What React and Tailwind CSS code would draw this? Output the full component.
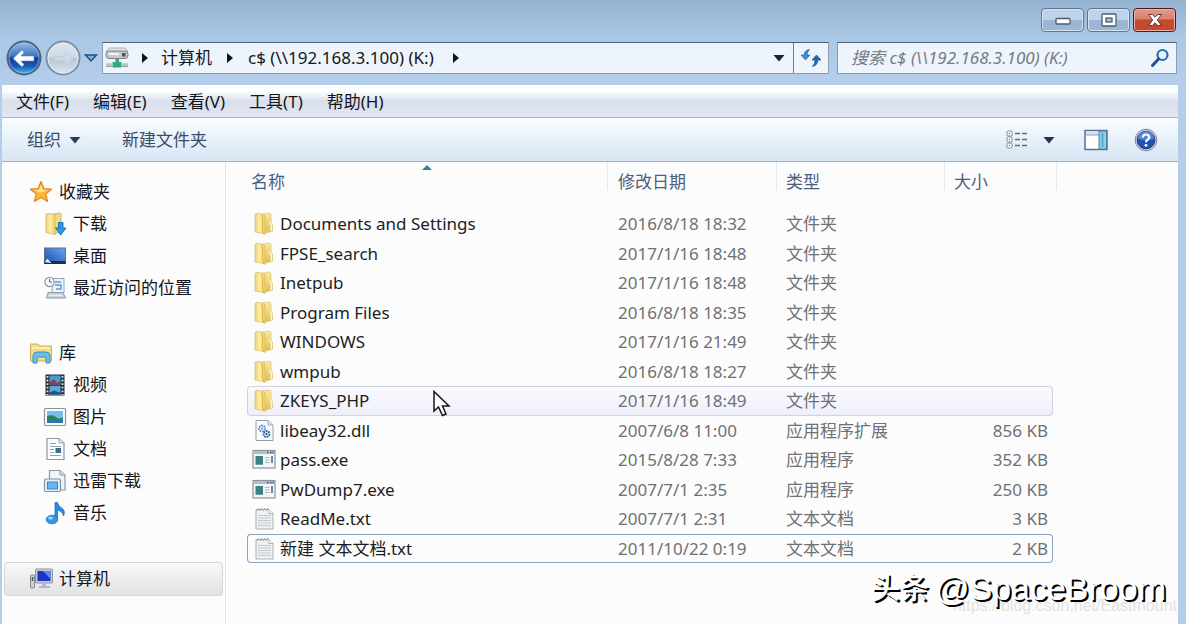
import React from "react";

const folders = [
  { name: "Documents and Settings", date: "2016/8/18 18:32", type: "文件夹", icon: "folder" },
  { name: "FPSE_search", date: "2017/1/16 18:48", type: "文件夹", icon: "folder" },
  { name: "Inetpub", date: "2017/1/16 18:48", type: "文件夹", icon: "folder" },
  { name: "Program Files", date: "2016/8/18 18:35", type: "文件夹", icon: "folder" },
  { name: "WINDOWS", date: "2017/1/16 21:49", type: "文件夹", icon: "folder" },
  { name: "wmpub", date: "2016/8/18 18:27", type: "文件夹", icon: "folder" },
  { name: "ZKEYS_PHP", date: "2017/1/16 18:49", type: "文件夹", icon: "folder", state: "hover" },
];

const files = [
  { name: "libeay32.dll", date: "2007/6/8 11:00", type: "应用程序扩展", size: "856 KB", icon: "dll" },
  { name: "pass.exe", date: "2015/8/28 7:33", type: "应用程序", size: "352 KB", icon: "exe" },
  { name: "PwDump7.exe", date: "2007/7/1 2:35", type: "应用程序", size: "250 KB", icon: "exe" },
  { name: "ReadMe.txt", date: "2007/7/1 2:31", type: "文本文档", size: "3 KB", icon: "txt" },
  { name: "新建 文本文档.txt", date: "2011/10/22 0:19", type: "文本文档", size: "2 KB", icon: "txt", state: "focus" },
];

const menus = ["文件(F)", "编辑(E)", "查看(V)", "工具(T)", "帮助(H)"];

const FolderIcon = () => (
  <svg width="22" height="24" viewBox="0 0 22 24">
    <defs>
      <linearGradient id="folderFront" x1="0" x2="1" y1="0" y2="0">
        <stop offset="0" stopColor="#ecd07a" />
        <stop offset="0.45" stopColor="#fbeea6" />
        <stop offset="1" stopColor="#f0cf62" />
      </linearGradient>
      <linearGradient id="folderBack" x1="0" x2="0" y1="0" y2="1">
        <stop offset="0" stopColor="#f8e9a4" />
        <stop offset="1" stopColor="#e2bd4e" />
      </linearGradient>
    </defs>
    <path d="M9 2 L16 1.2 Q18 1.2 18 3 V10 Q20 12 19.500 15 V19 L11 21.500 Z" fill="url(#folderBack)" stroke="#dcbf6a" strokeWidth="0.7" />
    <path d="M16.500 10 Q19.500 13 18 19" fill="none" stroke="#fdf8da" strokeWidth="1.400" />
    <path d="M2 3 Q2 1.500 3.500 1.500 L7 1.500 L12 3.500 V22.500 L8 21 L2 20 Z" fill="url(#folderFront)" stroke="#d9bc66" strokeWidth="0.7" />
    <path d="M8 3 Q10 5 9.500 12 T11 22" fill="none" stroke="#d9ac3e" strokeWidth="0.9" />
  </svg>
);

const DllIcon = () => (
  <svg width="22" height="24" viewBox="0 0 22 24">
    <path d="M3 1.500 H15 L20 6 V21.500 H3 Z" fill="#fbfcfe" stroke="#949ca8" />
    <path d="M15 1.500 V6 H20" fill="#dfe4ec" stroke="#a2abb7" />
    <circle cx="9" cy="9.500" r="3" fill="#eaf3fc" stroke="#5e8abc" strokeWidth="1.800" strokeDasharray="1.8 0.8" />
    <circle cx="13.500" cy="15" r="3" fill="#cfe3f7" stroke="#34619c" strokeWidth="1.800" strokeDasharray="1.8 0.8" />
    <circle cx="9" cy="9.500" r="1" fill="#5d8cc4" />
    <circle cx="13.500" cy="15" r="1" fill="#23487c" />
  </svg>
);

const ExeIcon = () => (
  <svg width="24" height="24" viewBox="0 0 24 24">
    <rect x="1" y="2.500" width="22" height="17.500" fill="#f4f6f8" stroke="#8a94a0" strokeWidth="1.200" />
    <rect x="1.600" y="3" width="20.800" height="3" fill="#b4bdc8" />
    <path d="M15 4.500 h1.500 M18 4.500 h1.500 M20.500 4.500 h1.500" stroke="#4d5a69" strokeWidth="1.500" />
    <rect x="3.500" y="8" width="7.500" height="8.500" fill="#2f8a7c" />
    <path d="M3.500 16.500 L11 9 V16.500 Z" fill="#4a7892" />
    <path d="M13 9.500 h4.500 M13 12 h4.500 M13 14.500 h4.500" stroke="#a9b7c4" strokeWidth="1.200" />
    <path d="M20 8 v7" stroke="#3b648d" strokeWidth="1.500" />
  </svg>
);

const TxtIcon = () => (
  <svg width="22" height="24" viewBox="0 0 22 24">
    <path d="M3 2.500 H16 L20 6.500 V22 H3 Z" fill="#eff0f1" stroke="#abafb4" />
    <path d="M4 4 l2 -3 M7 4 l2 -3 M10 4 l2 -3 M13 4 l2 -3" stroke="#969ba1" strokeWidth="1" />
    <path d="M16 2.500 V6.500 H20" fill="#fff" stroke="#abafb4" />
    <path d="M5 8.500 H18 M5 11 H18 M5 13.500 H18 M5 16 H18 M5 18.500 H18" stroke="#c6c9cd" strokeWidth="1" />
  </svg>
);

const fileIcons = { folder: FolderIcon, dll: DllIcon, exe: ExeIcon, txt: TxtIcon };

const StarIcon = () => (
  <svg width="24" height="24" viewBox="0 0 24 24">
    <path
      d="M12 1.5 L14.9 8.7 L22.5 9.2 L16.7 14.1 L18.7 21.5 L12 17.4 L5.3 21.5 L7.3 14.1 L1.5 9.2 L9.1 8.7 Z"
      fill="#fdb931"
      stroke="#e0842a"
      strokeWidth="1.2"
      strokeLinejoin="round"
    />
    <path d="M12 4.5 L14 10 L19 10.3 L12 12.5 L5 10.3 L10 10 Z" fill="#ffe38a" />
  </svg>
);

const DownloadIcon = () => (
  <svg width="24" height="24" viewBox="0 0 24 24">
    <path d="M10 2 L17 1 Q18 1 18 2 V19 L12 22 Z" fill="#efd888" stroke="#cfae5c" strokeWidth="0.8" />
    <path d="M3 2 L8 1.500 L12 3 V22.500 L3 20.500 Z" fill="url(#folderFront)" stroke="#d7b660" strokeWidth="0.8" />
    <path d="M15.5 10.5 H20 V16 H23 L17.7 23 L12.5 16 H15.5 Z" fill="#2d95e8" stroke="#1568b8" strokeWidth="0.9" />
  </svg>
);

const DesktopIcon = () => (
  <svg width="24" height="24" viewBox="0 0 24 24">
    <defs>
      <linearGradient id="desk" x1="0" x2="1" y1="1" y2="0">
        <stop offset="0" stopColor="#1b4bb0" />
        <stop offset="1" stopColor="#6aa5f0" />
      </linearGradient>
    </defs>
    <rect x="1.5" y="4" width="21" height="15.5" fill="url(#desk)" stroke="#5b6f85" />
    <path d="M1.5 17 h21 v3 h-21 z" fill="#1d2d45" />
    <path d="M2.5 18 l2 -3 l2 3 z M6 18.5 h2" fill="#d8ecff" stroke="#d8ecff" />
  </svg>
);

const RecentIcon = () => (
  <svg width="24" height="24" viewBox="0 0 24 24">
    <path d="M10 2.5 H21 V17 H9 Z" fill="#eaf4fc" stroke="#92a5b6" />
    <path d="M12 6 h6 M12 9 h6 v4 h-5" fill="none" stroke="#5f9bd0" strokeWidth="1.5" />
    <path d="M5 16.5 H20 L22.500 22 H3.500 Z" fill="#c7cfd6" stroke="#8f9aa4" />
    <path d="M6 19.5 h13" stroke="#eef1f3" strokeWidth="1.5" />
    <circle cx="6.5" cy="6" r="4.6" fill="#f7f9fb" stroke="#8b98a5" strokeWidth="1.2" />
    <path d="M6.5 3 V6 H9" fill="none" stroke="#5c6d7e" />
  </svg>
);

const LibraryIcon = () => (
  <svg width="24" height="24" viewBox="0 0 24 24">
    <path d="M1.5 3 H9 L11 5 H22.5 V20 H1.5 Z" fill="#f3dc86" stroke="#cfae58" />
    <path d="M3 7 H21" stroke="#fff5c8" strokeWidth="1.5" />
    <path d="M4 22 V15 Q4 11 8 11 H17 Q21 11 21 15 V22 H17 V17.5 Q17 16 15 16 H10 Q8 16 8 17.5 V22 Z" fill="#6bbdec" stroke="#3d8fc4" />
  </svg>
);

const VideoIcon = () => (
  <svg width="24" height="24" viewBox="0 0 24 24">
    <rect x="2.5" y="1.5" width="19" height="21" fill="#252f39" />
    <rect x="6.5" y="2.5" width="11" height="9" fill="#4b9bd3" />
    <rect x="6.5" y="12.8" width="11" height="9" fill="#5ba8db" />
    <path d="M7 9 l4 -3 l3 4 l3 -2 v3.5 h-10 z" fill="#8c3f4a" />
    <path d="M7 19.5 l4 -2 l6 2 v2 h-10 z" fill="#24507c" />
    <path d="M4.5 3 V22 M19.5 3 V22" stroke="#dce7ef" strokeWidth="1.8" strokeDasharray="1.8 1.8" />
  </svg>
);

const PictureIcon = () => (
  <svg width="24" height="24" viewBox="0 0 24 24">
    <rect x="1.5" y="3.5" width="21" height="17" rx="1" fill="#fbfcfd" stroke="#8398aa" strokeWidth="1.2" />
    <rect x="4" y="6" width="16" height="12" fill="#74c0ea" />
    <path d="M4 11 Q10 9 13 12 T20 12 V15 H4 Z" fill="#2f7f5e" />
    <path d="M4 14.5 H20 V18 H4 Z" fill="#2c7aa3" />
  </svg>
);

const DocIcon = () => (
  <svg width="24" height="24" viewBox="0 0 24 24">
    <path d="M4 1.5 H16 L21 6 V22.5 H4 Z" fill="#fcfdfe" stroke="#8d97a2" strokeWidth="1.2" />
    <path d="M16 1.5 V6 H21" fill="#e3e8ed" stroke="#9aa4ae" />
    <path d="M7 6.5 h6 M7 9.5 h11 M7 12.5 h4 M7 15.5 h4 M7 18.5 h11" stroke="#96a4b2" strokeWidth="1.2" />
    <rect x="12.5" y="11" width="5.5" height="5" fill="#356f8d" />
  </svg>
);

const ThunderDocIcon = () => (
  <svg width="24" height="24" viewBox="0 0 24 24">
    <path d="M6.500 1.500 H17 L22 6 V21 H6.500 Z" fill="#f1f5f8" stroke="#8c9aa8" strokeWidth="1.2" />
    <path d="M17 1.500 V6 H22" fill="#d9e1e8" stroke="#8c9aa8" />
    <rect x="1.500" y="10" width="16" height="12.500" rx="1.500" fill="#e5f1fb" stroke="#7e93a7" strokeWidth="1.2" />
    <rect x="4.500" y="13" width="10" height="7" fill="#6fb4f2" stroke="#3381cf" />
  </svg>
);

const MusicIcon = () => (
  <svg width="24" height="24" viewBox="0 0 24 24">
    <path d="M12 1.500 H14.500 Q15.500 5.500 19.500 7.500 Q22.500 10 20.500 15 Q20 10.500 14.500 9 V18 H12 Z" fill="#2a8be0" stroke="#1766b0" strokeWidth="0.7" />
    <ellipse cx="9" cy="18.500" rx="5.800" ry="4.300" fill="#2f98ea" stroke="#1766b0" strokeWidth="0.7" />
    <ellipse cx="7.500" cy="17" rx="2.500" ry="1.500" fill="#9ad3fa" />
  </svg>
);

const ComputerIcon = () => (
  <svg width="24" height="24" viewBox="0 0 24 24">
    <rect x="1.500" y="8" width="4" height="13" rx="1" fill="#d2d6da" stroke="#7d858d" />
    <path d="M3.500 10 v4" stroke="#4d5660" strokeWidth="1.500" />
    <rect x="6.500" y="2" width="17" height="14" rx="1" fill="#c6cbd0" stroke="#90979e" />
    <rect x="8.500" y="4" width="13" height="10" fill="#1b35c9" />
    <path d="M14 4 H21.500 V12 Z" fill="#5f87ef" />
    <path d="M13 16 h4 v3 h4 v2 h-11 v-2 h3 z" fill="#b4babf" />
  </svg>
);

const DriveIcon = () => (
  <svg width="24" height="24" viewBox="0 0 24 24">
    <path d="M4 2 H20 L23 6 H1 Z" fill="#e4e6e9" stroke="#9a9ea4" strokeWidth="0.8" />
    <rect x="1" y="5" width="22" height="7.500" rx="3" fill="#c6c9ce" stroke="#7b8086" />
    <path d="M4 8 h10" stroke="#f4f5f6" strokeWidth="2" />
    <rect x="17" y="7" width="3.500" height="3.500" fill="#4d5a52" />
    <path d="M10.500 13 h3.500 v3 h2.500 v5.500 h-9 v-5.500 h3 z" fill="#2faa80" />
    <path d="M1 19 h6.500 M16.500 19 h6.500" stroke="#b9c5c9" strokeWidth="3.500" />
    <path d="M1 20.500 h6.500 M16.500 20.500 h6.500" stroke="#93a2a8" />
  </svg>
);

const SearchIcon = () => (
  <svg width="20" height="20" viewBox="0 0 20 20">
    <circle cx="12.500" cy="7" r="5" fill="#e6f3fd" stroke="#2c6cb4" strokeWidth="2.200" />
    <path d="M8.800 10.800 L2.500 17.500" stroke="#28508c" strokeWidth="3" strokeLinecap="round" />
  </svg>
);

const RefreshIcon = () => (
  <svg width="22" height="20" viewBox="0 0 22 20">
    <path d="M9.500 1.500 Q4.500 2 4 7 H1 L5.500 12 L10 7 H7 Q7 4 9.500 1.500 Z" fill="#3a8bd8" stroke="#2769b0" strokeWidth="0.7" />
    <path d="M12.500 18.500 Q17.500 17.500 18 12 H21 L16.500 7 L12 12 H15 Q15 16 12.500 18.500 Z" fill="#2468b4" stroke="#1d5596" strokeWidth="0.7" />
  </svg>
);

const BackIcon = () => (
  <svg width="36" height="36" viewBox="0 0 36 36">
    <defs>
      <linearGradient id="back" x1="0" x2="0" y1="0" y2="1">
        <stop offset="0" stopColor="#9dbde4" />
        <stop offset="0.45" stopColor="#3b73c2" />
        <stop offset="0.5" stopColor="#0d3f98" />
        <stop offset="0.75" stopColor="#1a5cb8" />
        <stop offset="1" stopColor="#4cc0f2" />
      </linearGradient>
    </defs>
    <circle cx="18" cy="18" r="16.500" fill="url(#back)" stroke="#4d6486" strokeWidth="2" />
    <circle cx="18" cy="18" r="15" fill="none" stroke="#a9c9ee" strokeOpacity="0.6" />
    <path d="M7 18.500 L16 10 L18 12.500 L15 16 H28 V21 H15 L18 24.500 L16 27 Z" fill="#fff" stroke="#5b82b8" strokeWidth="0.6" />
  </svg>
);

const ForwardIcon = () => (
  <svg width="36" height="36" viewBox="0 0 36 36">
    <defs>
      <linearGradient id="forward" x1="0" x2="0" y1="0" y2="1">
        <stop offset="0" stopColor="#dde6ee" />
        <stop offset="0.48" stopColor="#cdd9e4" />
        <stop offset="0.52" stopColor="#b5c5d5" />
        <stop offset="1" stopColor="#dbe7f2" />
      </linearGradient>
    </defs>
    <circle cx="18" cy="18" r="16.500" fill="url(#forward)" stroke="#7f8fa5" strokeWidth="2" />
    <circle cx="18" cy="18" r="15" fill="none" stroke="#e9f0f6" />
    <path d="M28 18.500 L20 11.500 V16.500 H9 V20.500 H20 V25.500 Z" fill="#ccd9e5" stroke="#bfcedc" strokeWidth="0.800" />
  </svg>
);

const ArrowRight = () => (
  <svg width="8" height="12" viewBox="0 0 8 12">
    <path d="M1 1 L7 6 L1 11 Z" fill="#10141c" />
  </svg>
);

const ArrowDown = ({ className = "text-[#17233c]" }) => (
  <svg width="12" height="8" viewBox="0 0 12 8" className={className}>
    <path d="M0.500 1 H11.500 L6 7.500 Z" fill="currentColor" />
  </svg>
);

const sideGroups = [
  {
    title: "收藏夹",
    icon: StarIcon,
    items: [
      { label: "下载", icon: DownloadIcon },
      { label: "桌面", icon: DesktopIcon },
      { label: "最近访问的位置", icon: RecentIcon },
    ],
  },
  {
    title: "库",
    icon: LibraryIcon,
    items: [
      { label: "视频", icon: VideoIcon },
      { label: "图片", icon: PictureIcon },
      { label: "文档", icon: DocIcon },
      { label: "迅雷下载", icon: ThunderDocIcon },
      { label: "音乐", icon: MusicIcon },
    ],
  },
];

const TitleBar = () => (
  <div className="flex justify-end gap-[3px] pt-2 pr-[10px]">
    <button
      aria-label="最小化"
      className="flex h-6 w-[43px] items-center justify-center rounded-sm border border-[#5d7796] bg-linear-to-b from-[#bfd3e8] from-50% to-[#9bb7d5] to-50% shadow-[inset_0_0_0_1px_#d5e4f2]"
    >
      <svg width="16" height="14" viewBox="0 0 16 14">
        <rect x="1" y="5.500" width="14" height="5.500" rx="1" fill="#fff" stroke="#4d5c70" strokeWidth="1.300" />
      </svg>
    </button>
    <button
      aria-label="最大化"
      className="flex h-6 w-[43px] items-center justify-center rounded-sm border border-[#5d7796] bg-linear-to-b from-[#bfd3e8] from-50% to-[#9bb7d5] to-50% shadow-[inset_0_0_0_1px_#d5e4f2]"
    >
      <svg width="16" height="14" viewBox="0 0 16 14">
        <rect x="1" y="1" width="14" height="12" rx="1" fill="#fff" stroke="#4d5c70" strokeWidth="1.300" />
        <rect x="5" y="5" width="6" height="4" fill="#a9c0da" stroke="#4d5c70" strokeWidth="1.300" />
      </svg>
    </button>
    <button
      aria-label="关闭"
      className="flex h-6 w-[43px] items-center justify-center rounded-sm border border-[#4a1a1e] bg-linear-to-b from-[#e09a8a] via-[#d8826e] via-45% to-[#c5492f] to-50% shadow-[inset_0_0_0_1px_#eeb0a2]"
    >
      <svg width="16" height="14" viewBox="0 0 16 14">
        <path
          d="M1.500 1.500 H5.500 L8 4.200 L10.500 1.500 H14.500 L10.300 7 L14.500 12.500 H10.500 L8 9.800 L5.500 12.500 H1.500 L5.700 7 Z"
          fill="#fff"
          stroke="#5a3a44"
        />
      </svg>
    </button>
  </div>
);

const AddressBar = () => (
  <div className="flex h-8 items-center pr-[9px] pl-[6px]">
    <button aria-label="后退" className="mr-[3px] shrink-0">
      <BackIcon />
    </button>
    <button aria-label="前进" className="mr-[3px] shrink-0">
      <ForwardIcon />
    </button>
    <button aria-label="最近的页面" className="shrink-0">
      <svg width="14" height="10" viewBox="0 0 14 10">
        <path d="M1.500 2 H12.500 L7 8 Z" fill="#7fb2dc" stroke="#244f80" strokeWidth="1.500" />
      </svg>
    </button>
    <div className="ml-1 flex h-8 min-w-0 flex-1 items-center border border-[#8a9bb2] border-t-[#4f5f76] bg-[#eef4fb]">
      <div className="flex min-w-0 flex-1 items-center pl-[2px]">
        <DriveIcon />
        <span className="mx-3">
          <ArrowRight />
        </span>
        <a href="#computer">计算机</a>
        <span className="mx-[14px]">
          <ArrowRight />
        </span>
        <a href="#share" className="whitespace-nowrap">
          c$ (\\192.168.3.100) (K:)
        </a>
        <span className="mx-[18px]">
          <ArrowRight />
        </span>
      </div>
      <button aria-label="以前的位置" className="px-2">
        <ArrowDown />
      </button>
      <button aria-label="刷新" className="flex h-full w-[35px] items-center justify-center border-l border-[#6c7d94]">
        <RefreshIcon />
      </button>
    </div>
    <label className="ml-2 flex h-8 w-[340px] items-center border border-[#8a9bb2] border-t-[#4f5f76] bg-[#eef4fb] pr-[6px] pl-[13px]">
      <input
        type="text"
        aria-label="搜索"
        placeholder="搜索 c$ (\\192.168.3.100) (K:)"
        className="min-w-0 flex-1 bg-transparent italic outline-none placeholder:text-[#747b84]"
      />
      <SearchIcon />
    </label>
  </div>
);

const Toolbar = () => (
  <div className="flex h-[45px] items-center border-t border-b border-t-[#a9b5c6] border-b-[#a3b1c4] bg-linear-to-b from-[#fbfdff] via-[#e9f2fb] via-45% to-[#d8e5f3] pr-5 pl-[25px] text-[#3a4b64]">
    <button className="flex items-center gap-2">
      组织
      <ArrowDown className="text-[#2a3d59]" />
    </button>
    <button className="ml-[41px]">新建文件夹</button>
    <div className="ml-auto flex items-center">
      <button aria-label="更改您的视图" className="flex items-center gap-[15px]">
        <svg width="22" height="20" viewBox="0 0 22 20">
          {[1, 7, 13].map((y) => (
            <g key={y}>
              <rect x="1" y={y} width="5" height="5" rx="1" fill="#fff" stroke="#7b8a9c" />
              <path d={`M3 ${y + 2.5} h1`} stroke="#3f5b80" />
              <path d={`M9 ${y + 2.5} h5 M16 ${y + 2.5} h5`} stroke="#5d6c80" strokeWidth="1.500" />
            </g>
          ))}
        </svg>
        <ArrowDown className="text-[#26324a]" />
      </button>
      <button aria-label="显示预览窗格" className="ml-[29px]">
        <svg width="24" height="22" viewBox="0 0 24 22">
          <rect x="1" y="1.500" width="22" height="19" fill="#fff" stroke="#5a728e" strokeWidth="1.500" />
          <path d="M2 2.500 H15 V6 H2 Z" fill="#d5e2ef" />
          <path d="M2 6 H15" stroke="#8ba3bd" />
          <rect x="15" y="2" width="7.500" height="18" fill="#8ed0ea" stroke="#4b7fa5" />
          <path d="M18.500 4 V18" stroke="#5aa7cf" strokeWidth="2" />
        </svg>
      </button>
      <button aria-label="获取帮助" className="ml-[26px]">
        <svg width="24" height="24" viewBox="0 0 24 24">
          <circle cx="12" cy="12" r="10.800" fill="#c9d0dd" stroke="#7d8799" />
          <circle cx="12" cy="12" r="8.800" fill="#2450b0" stroke="#17357f" />
          <path d="M4 11 A8 8 0 0 1 20 11 Q12 13 4 11 Z" fill="#5b83d4" />
          <path d="M8.800 9.500 Q9 6.500 12 6.500 Q15.200 6.500 15.200 9.300 Q15.200 11 13.300 12 Q12 12.800 12 14.300" fill="none" stroke="#fff" strokeWidth="2.200" />
          <circle cx="12" cy="17.300" r="1.400" fill="#fff" />
        </svg>
      </button>
    </div>
  </div>
);

const Sidebar = () => (
  <nav className="w-[224px] shrink-0 border-r border-[#dde6f0] pt-[14px]">
    {sideGroups.map((group) => {
      const GroupIcon = group.icon;
      return (
        <div key={group.title} className="mb-[33px]">
          <a href="#group" className="flex h-8 items-center gap-[6px] pl-[27px]">
            <GroupIcon />
            {group.title}
          </a>
          {group.items.map((item) => {
            const ItemIcon = item.icon;
            return (
              <a key={item.label} href="#item" className="flex h-8 items-center gap-[6px] pl-[41px]">
                <ItemIcon />
                {item.label}
              </a>
            );
          })}
        </div>
      );
    })}
    <a
      href="#computer"
      className="mx-[2px] flex h-[34px] items-center gap-[6px] rounded-sm border border-[#d4d6d9] bg-linear-to-b from-[#f8f8f8] to-[#e2e3e4] pl-6"
    >
      <ComputerIcon />
      计算机
    </a>
  </nav>
);

// hover and focus rows get an outline around the whole row
const rowStyles = {
  hover: "border-[#cfd3e0] bg-linear-to-b from-[#fafaff] to-[#efeffa]",
  focus: "border-[#8ba3c2]",
  none: "border-transparent",
};

const FileRow = ({ file }) => {
  const Icon = fileIcons[file.icon];
  const cell = `border-y p-0 ${rowStyles[file.state || "none"]}`;
  return (
    <tr className="h-[30px] text-[#6f7174] even:h-[29px]">
      <td className={`${cell} rounded-l-sm border-l`}>
        <div className="flex items-center gap-1 pl-1 text-[#1c1e22]">
          <span className="flex w-6 justify-center">
            <Icon />
          </span>
          {file.name}
        </div>
      </td>
      <td className={`${cell} pl-[10px]`}>{file.date}</td>
      <td className={`${cell} pl-[9px]`}>{file.type}</td>
      <td className={`${cell} rounded-r-sm border-r pr-1 text-right`}>{file.size}</td>
    </tr>
  );
};

const FileList = () => (
  <main className="min-w-0 flex-1 overflow-hidden pl-[21px]">
    <table className="w-[806px] table-fixed border-separate border-spacing-0 leading-6 whitespace-nowrap">
      <thead>
        <tr className="h-[47px] text-left align-top text-[#4c607a]">
          <th className="w-[361px] p-0 font-normal">
            <div className="relative h-7 border-r border-[#e6ebf2] pt-2 pl-1">
              名称
              <svg width="10" height="6" viewBox="0 0 10 6" className="absolute inset-x-0 top-[2px] mx-auto">
                <path d="M0 6 L5 1 L10 6 Z" fill="#3c7f96" />
              </svg>
            </div>
          </th>
          <th className="w-[169px] p-0 font-normal">
            <div className="h-7 border-r border-[#e6ebf2] pt-2 pl-[10px]">修改日期</div>
          </th>
          <th className="w-[168px] p-0 font-normal">
            <div className="h-7 border-r border-[#e6ebf2] pt-2 pl-[9px]">类型</div>
          </th>
          <th className="p-0 font-normal">
            <div className="-mr-1 h-7 border-r border-[#e6ebf2] pt-2 pl-[9px]">大小</div>
          </th>
        </tr>
      </thead>
      <tbody>
        {[...folders, ...files].map((file) => (
          <FileRow key={file.name} file={file} />
        ))}
      </tbody>
    </table>
  </main>
);

const App = () => {
  return (
    <div className="relative flex min-h-screen flex-col overflow-hidden bg-linear-to-b from-[#94b1cf] via-[#a9c8e5] via-[36px] to-[#b4cdeb] to-[80px] font-['Noto_Sans','Noto_Sans_CJK_SC',sans-serif] text-[17px] leading-6 text-[#14161a]">
      <TitleBar />
      <div className="pt-[10px] pb-[11px]">
        <AddressBar />
      </div>
      <div className="mr-2 ml-[2px] flex flex-1 flex-col bg-[#fcfcfd]">
        <div className="flex h-8 items-center gap-6 bg-linear-to-b from-[#fcfdfe] from-20% via-[#d9e0ec] via-50% to-[#e0e6f2] pt-[2px] pl-[14px]">
          {menus.map((menu) => (
            <button key={menu}>{menu}</button>
          ))}
        </div>
        <Toolbar />
        <div className="flex flex-1">
          <Sidebar />
          <FileList />
        </div>
      </div>

      {/* mouse pointer */}
      <svg width="20" height="28" viewBox="0 0 20 28" className="pointer-events-none absolute top-[390px] left-[432px]">
        <path d="M2 1.500 V21 L6.500 17 L10.500 25.500 L14 24 L10.500 16 H17 Z" fill="#fff" stroke="#15161c" strokeWidth="1.500" />
      </svg>

      <div className="pointer-events-none absolute right-[9px] bottom-[6px] font-['Liberation_Sans',sans-serif] text-[16px] text-[#e2e2e2]">
        https://blog.csdn.net/Eastmount
      </div>
      <div className="pointer-events-none absolute right-5 bottom-4 flex items-center gap-[6px] text-white [text-shadow:2px_2px_0_#000]">
        <span className="text-[29px] leading-10 font-medium">头条</span>
        <span className="font-['Liberation_Sans',sans-serif] text-[34px] leading-10">@SpaceBroom</span>
      </div>
    </div>
  );
};

export default App;
